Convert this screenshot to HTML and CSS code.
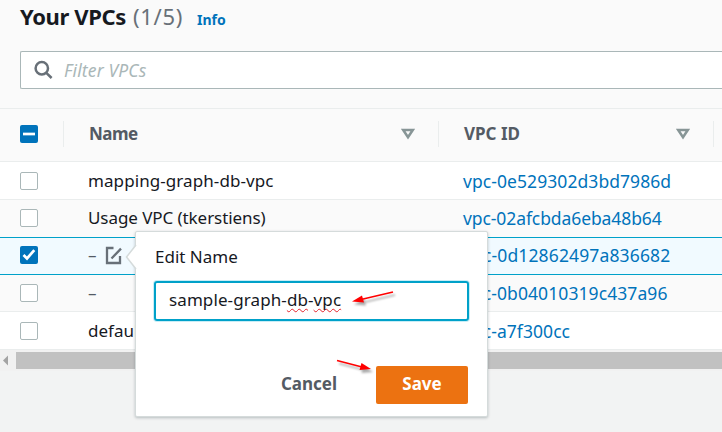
FILE: index.html
```html
<!DOCTYPE html>
<html lang="en">
<head>
<meta charset="utf-8">
<title>Your VPCs</title>
<link rel="stylesheet" href="styles.css">
</head>
<body>
<main class="panel">
  <header class="heading">
    <h1 class="title">Your VPCs</h1>
    <span class="count">(1/5)</span>
    <a class="info">Info</a>
  </header>
  <div class="filter">
    <svg class="search-icon" width="20" height="20" viewBox="0 0 20 20"><circle cx="7.8" cy="8.3" r="6.2"/><path d="M12.3 12.800L17.600 18"/></svg>
    <span class="placeholder">Filter VPCs</span>
  </div>
  <div class="table">
    <div class="row head">
      <div class="cell check"><span class="box on"><svg width="18" height="18" viewBox="0 0 18 18"><path d="M3 9h12"/></svg></span></div>
      <div class="cell name"><b class="th-name">Name</b><svg class="sort" width="14" height="12" viewBox="0 0 14 12"><path d="M2.2 2h9.6L7 9.3z"/></svg></div>
      <div class="cell id"><b class="th-id">VPC ID</b><svg class="sort" width="14" height="12" viewBox="0 0 14 12"><path d="M2.2 2h9.6L7 9.3z"/></svg></div>
    </div>
    <div class="row white">
      <div class="cell check"><span class="box"></span></div>
      <div class="cell name"><span class="n1">mapping-graph-db-vpc</span></div>
      <div class="cell id"><a class="v1">vpc-0e529302d3bd7986d</a></div>
    </div>
    <div class="row raised before-selected">
      <div class="cell check"><span class="box"></span></div>
      <div class="cell name"><span class="n2">Usage VPC (tkerstiens)</span></div>
      <div class="cell id"><a class="v2">vpc-02afcbda6eba48b64</a></div>
    </div>
    <div class="row raised selected">
      <div class="cell check"><span class="box on"><svg width="18" height="18" viewBox="0 0 18 18"><path d="M3.5 9l3.5 3.5 7.3-8.4"/></svg></span></div>
      <div class="cell name"><span class="dash">–</span><svg class="edit" width="18" height="19" viewBox="0 0 18 19"><path d="M8.5 2H2v15h13v-7M6.5 12.5L16 2.600"/></svg></div>
      <div class="cell id"><a class="v3">vpc-0d12862497a836682</a></div>
    </div>
    <div class="row short">
      <div class="cell check"><span class="box"></span></div>
      <div class="cell name"><span class="dash">–</span></div>
      <div class="cell id"><a class="v4">vpc-0b04010319c437a96</a></div>
    </div>
    <div class="row white">
      <div class="cell check"><span class="box"></span></div>
      <div class="cell name"><span>default</span></div>
      <div class="cell id"><a class="v5">vpc-a7f300cc</a></div>
    </div>
  </div>
  <div class="scrollbar"><svg width="16" height="20" viewBox="0 0 16 20"><path d="M3 10.5L8 5.5v10z"/></svg><div class="thumb"></div></div>
</main>
<section class="popover">
  <svg class="pointer" width="12" height="32" viewBox="0 0 12 32"><path class="pointer-fill" d="M12 3L2 16l10 13z"/><path class="pointer-edge" d="M11 4L1.5 16 11 28"/></svg>
  <div class="label"><span class="label-text">Edit Name</span></div>
  <div class="input"><span class="value">sample-graph-<u class="typo">db</u>-<u class="typo">vpc</u></span></div>
  <div class="actions"><button class="cancel">Cancel</button><button class="save">Save</button></div>
  <svg class="arrow first" width="48" height="24" viewBox="0 0 48 24"><path class="line" d="M42 5L10 12.5"/><path class="tip" d="M1 14.5L11 8.500l2 7z"/></svg>
  <svg class="arrow second" width="44" height="24" viewBox="0 0 44 24"><path class="line" d="M3 4.500L28 11"/><path class="tip" d="M37 13L25.500 14l2-7z"/></svg>
</section>
</body>
</html>
```
FILE: styles.css
```css
* { box-sizing: border-box; }
body { margin: 0; width: 722px; height: 432px; overflow: hidden; background: #f2f3f3; color: #16191f; font: 17px/24px "Noto Sans", sans-serif; }
.panel { background: #fafafa; height: 371px; }
.heading { display: flex; align-items: baseline; height: 51px; padding: 0 0 0 20px; white-space: nowrap; }
.title { margin: 0; width: 113px; font-size: 22px; line-height: 32px; font-weight: 700; letter-spacing: -.4px; }
.count { width: 64px; color: #687078; font-size: 22px; letter-spacing: .7px; }
.info { color: #0073bb; font-size: 14px; font-weight: 700; }
.filter { display: flex; align-items: center; height: 38px; margin-left: 20px; padding-left: 13px; background: #fff; border: 1px solid #aab7b8; border-right: 0; border-radius: 2px 0 0 2px; }
.search-icon { fill: none; stroke: #687078; stroke-width: 2.5; }
.placeholder { margin-left: 10px; color: #aab7b8; font-size: 17.5px; font-style: italic; letter-spacing: .15px; }
.table { margin-top: 19px; border-top: 1px solid #eaeded; }
.row { display: flex; align-items: center; height: 38px; border-bottom: 1px solid #eaeded; }
.head { height: 53px; padding-bottom: 2px; }
.raised { padding-bottom: 2px; }
.white { background: #fff; }
.before-selected { border-bottom-color: #00a1c9; }
.selected { height: 37px; background: #f1faff; border-bottom-color: #00a1c9; }
.short { height: 37px; }
.cell { display: flex; align-items: center; height: 26px; white-space: nowrap; }
.check { width: 64px; padding-left: 20px; }
.name { width: 375px; padding-left: 24px; }
.id { width: 275px; padding-left: 24px; color: #0073bb; font-size: 17.5px; }
.head .cell { color: #545b64; font-size: 17px; border-right: 1px solid #eaeded; justify-content: space-between; padding-right: 23px; }
.head .check { padding-right: 0; }
.head .name, .head .id { padding-left: 25px; }
.th-name { letter-spacing: -.5px; }
.n1 { letter-spacing: .08px; }
.n2 { letter-spacing: -.07px; }
.v1 { letter-spacing: .07px; }
.v2 { letter-spacing: -.09px; }
.v3 { letter-spacing: .14px; }
.v4 { letter-spacing: .08px; }
.v5 { letter-spacing: .06px; }
.box { width: 18px; height: 18px; background: #fff; border: 1px solid #aab7b8; border-radius: 2px; }
.box.on { background: #0073bb; border: 0; }
.box svg { display: block; fill: none; stroke: #fff; stroke-width: 2.7; }
.sort { fill: none; stroke: #879596; stroke-width: 2.5; }
.dash { color: #545b64; }
.edit { margin-left: 8px; fill: none; stroke: #687078; stroke-width: 2.3; }
.scrollbar { display: flex; height: 21px; background: #f1f1f1; }
.scrollbar svg { fill: #a3a3a3; }
.thumb { flex: 1; height: 17px; margin-top: 2px; background: #c1c1c1; }
.popover { position: absolute; left: 135px; top: 231px; width: 353px; height: 186px; padding: 13px 18px 12px; background: #fff; border: 1px solid #d5dbdb; border-radius: 2px; box-shadow: 0 1px 3px #001c2440; }
.pointer { position: absolute; left: -11px; top: 9px; }
.pointer-fill { fill: #fff; }
.pointer-edge { fill: none; stroke: #d5dbdb; stroke-width: 1.5; }
.label { height: 36px; padding-left: 1px; }
.input { height: 40px; padding: 5px 13px; border: 2px solid #00a1c9; border-radius: 3px; box-shadow: 0 0 0 1px #c8edf6; white-space: nowrap; }
.value { letter-spacing: .1px; }
.typo { text-decoration: underline wavy #e3242b 1px; text-underline-offset: 2px; text-decoration-skip-ink: none; }
.actions { display: flex; justify-content: flex-end; margin: 45px 1px 0; }
button { height: 38px; padding: 0; border: 0; border-radius: 2px; font: 700 17px/36px "Noto Sans", sans-serif; }
.cancel { width: 94px; height: 36px; margin-right: 20px; background: #fff; color: #545b64; }
.save { width: 92px; padding-bottom: 2px; background: #ec7211; color: #fff; }
.arrow { position: absolute; filter: drop-shadow(2px 3px 1px #0005); }
.first { left: 215px; top: 55px; }
.second { left: 198px; top: 124px; }
.line { stroke: #f00; stroke-width: 1.6; }
.tip { fill: #f00; }
```
